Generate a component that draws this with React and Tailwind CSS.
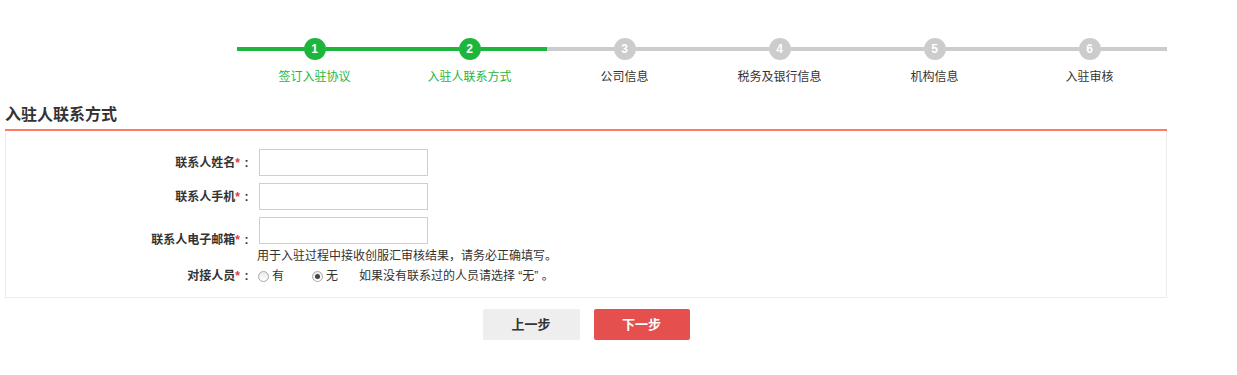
const font = { fontFamily: '"Liberation Sans", "Noto Sans CJK SC", sans-serif' }

const steps = ['签订入驻协议', '入驻人联系方式', '公司信息', '税务及银行信息', '机构信息', '入驻审核']
const done = 2

function Step({ idx, label }) {
  const active = idx < done
  const leftOn = idx < done
  const rightOn = idx < done
  return (
    <div className="flex flex-col items-center">
      <div className="flex w-full items-center">
        <div className={`h-[4px] flex-1 ${leftOn ? 'bg-[#1db53c]' : 'bg-[#cccccc]'}`} />
        <div
          className={`flex h-[22px] w-[22px] items-center justify-center rounded-full text-[12px] font-bold text-white ${
            active ? 'bg-[#1db53c]' : 'bg-[#cccccc]'
          }`}
        >
          {idx + 1}
        </div>
        <div className={`h-[4px] flex-1 ${rightOn ? 'bg-[#1db53c]' : 'bg-[#cccccc]'}`} />
      </div>
      <div className={`mt-[9px] text-[12px] leading-[16px] ${active ? 'text-[#1db53c]' : 'text-[#333]'}`}>
        {label}
      </div>
    </div>
  )
}

function Label({ text }) {
  return (
    <div className="w-[247px] shrink-0 text-right text-[12px] font-bold leading-[16px] text-[#333]">
      {text}
      <span className="text-[#e4393c]">*</span>
      <span className="inline-block w-[13px] text-center">:</span>
    </div>
  )
}

function Radio({ checked }) {
  return (
    <span className="flex h-[11px] w-[11px] items-center justify-center rounded-full border border-[#a9a9a9] bg-gradient-to-b from-[#e9e9e9] to-white">
      {checked ? <span className="h-[5px] w-[5px] rounded-full bg-[#444]" /> : null}
    </span>
  )
}

export default function App() {
  return (
    <div className="min-h-[375px] bg-white" style={font}>
      <div className="ml-[5px] w-[1162px] pt-[38px]">
        <div className="ml-[232px] grid w-[930px] grid-cols-6">
          {steps.map((s, i) => (
            <Step key={s} idx={i} label={s} />
          ))}
        </div>

        <div className="mt-[17px] border-b-2 border-[#ff7a62] pt-[1px] pb-[2px] text-[16px] font-bold leading-[24px] text-[#333]">
          入驻人联系方式
        </div>

        <div className="border border-t-0 border-[#ececec] pt-[18px] pb-[13px]">
          <div className="flex items-center">
            <Label text="联系人姓名" />
            <input className="ml-[6px] h-[27px] w-[169px] border border-[#cfcfcf] outline-none" />
          </div>
          <div className="mt-[7px] flex items-center">
            <Label text="联系人手机" />
            <input className="ml-[6px] h-[27px] w-[169px] border border-[#cfcfcf] outline-none" />
          </div>
          <div className="mt-[7px] flex items-center">
            <Label text="联系人电子邮箱" />
            <div className="ml-[6px] flex flex-col">
              <input className="h-[27px] w-[169px] border border-[#cfcfcf] outline-none" />
              <div className="mt-[5px] -ml-[2px] text-[12px] leading-[14px] text-[#333]">
                用于入驻过程中接收创服汇审核结果，请务必正确填写。
              </div>
            </div>
          </div>
          <div className="mt-[5px] flex items-center">
            <Label text="对接人员" />
            <div className="ml-[5px] flex items-center text-[12px] leading-[16px] text-[#333]">
              <Radio />
              <span className="ml-[3px]">有</span>
              <span className="ml-[28px]">
                <Radio checked />
              </span>
              <span className="ml-[3px]">无</span>
              <span className="ml-[21px]">如果没有联系过的人员请选择 “无” 。</span>
            </div>
          </div>
        </div>

        <div className="mt-[11px] flex justify-center gap-[14px]">
          <button className="h-[31px] w-[97px] rounded-[2px] bg-[#eeeeee] text-[13px] font-bold text-[#333]">
            上一步
          </button>
          <button className="h-[31px] w-[96px] rounded-[2px] bg-[#e5504f] text-[13px] font-bold text-white">
            下一步
          </button>
        </div>
      </div>
    </div>
  )
}
